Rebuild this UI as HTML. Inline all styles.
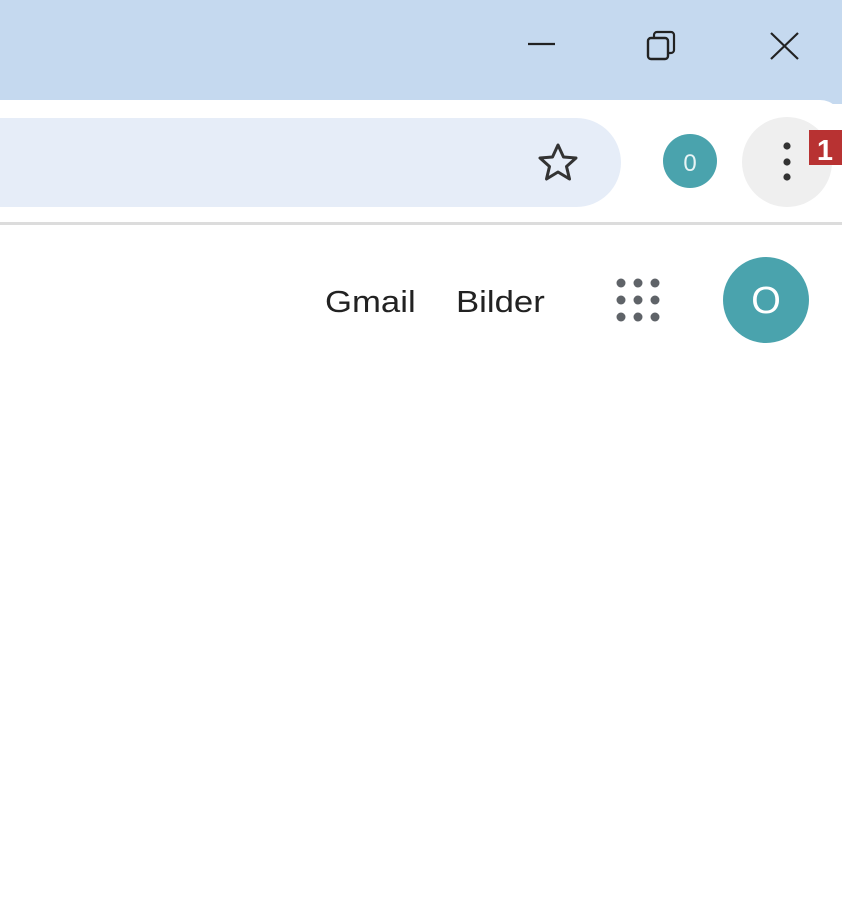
<!DOCTYPE html>
<html><head><style>
html,body{margin:0;padding:0;width:842px;height:918px;overflow:hidden;background:#fff;font-family:"Liberation Sans",Arial,sans-serif}
.top{position:absolute;left:0;top:0;width:842px;height:104px;background:#c5d9ef}
.tool{position:absolute;left:0;top:100px;width:842px;height:124px;background:#fff;border-top-right-radius:22px}
.sep{position:absolute;left:0;top:222px;width:842px;height:3px;background:#dcdcdc}
.omni{position:absolute;left:-60px;top:118px;width:681px;height:89px;background:#e6edf8;border-radius:45px}
.t{position:absolute;font-size:31px;color:#222;top:284px;transform-origin:left top;transform:scaleX(1.12)}
</style></head><body>
<div class="top"></div>
<svg style="position:absolute;left:0;top:0" width="842" height="100">
<line x1="528" y1="44" x2="555" y2="44" stroke="#222" stroke-width="2.2"/>
<rect x="648" y="38" width="20" height="21" rx="3" fill="none" stroke="#222" stroke-width="2.4"/>
<path d="M654 38 V35 a3 3 0 0 1 3-3 H671 a3 3 0 0 1 3 3 V50 a3 3 0 0 1 -3 3 H668" fill="none" stroke="#222" stroke-width="2.2"/>
<path d="M771 33 L798 59 M798 33 L771 59" stroke="#222" stroke-width="2.2"/>
</svg>
<div class="tool"></div>
<div class="omni"></div>
<div class="sep"></div>
<svg style="position:absolute;left:0;top:100px" width="842" height="124">
<path d="M558 45 L563.5 57 L576 58 L566.5 66.5 L569.5 79 L558 72 L546.5 79 L549.5 66.5 L540 58 L552.5 57 Z" fill="none" stroke="#333" stroke-width="3" stroke-linejoin="round"/>
<circle cx="690" cy="61" r="27" fill="#4aa3ad"/>
<text x="690" y="71" font-size="24" fill="#e8f4f5" text-anchor="middle" font-family="Liberation Sans">0</text>
<circle cx="787" cy="62" r="45" fill="#efefef"/>
<circle cx="787" cy="46" r="3.6" fill="#333"/>
<circle cx="787" cy="62" r="3.6" fill="#333"/>
<circle cx="787" cy="77" r="3.6" fill="#333"/>
<rect x="809" y="30" width="33" height="35" fill="#b83232"/>
<text x="825" y="60" font-size="29" font-weight="bold" fill="#fff" text-anchor="middle" font-family="Liberation Sans">1</text>
</svg>
<div class="t" style="left:325px">Gmail</div>
<div class="t" style="left:456px">Bilder</div>
<svg style="position:absolute;left:600px;top:255px" width="242" height="100">
<g fill="#5f6368">
<circle cx="21" cy="28" r="4.5"/><circle cx="38" cy="28" r="4.5"/><circle cx="55" cy="28" r="4.5"/>
<circle cx="21" cy="45" r="4.5"/><circle cx="38" cy="45" r="4.5"/><circle cx="55" cy="45" r="4.5"/>
<circle cx="21" cy="62" r="4.5"/><circle cx="38" cy="62" r="4.5"/><circle cx="55" cy="62" r="4.5"/>
</g>
<circle cx="166" cy="45" r="43" fill="#4aa3ad"/>
<text x="166" y="58" font-size="38" fill="#fff" text-anchor="middle" font-family="Liberation Sans">O</text>
</svg>
</body></html>
